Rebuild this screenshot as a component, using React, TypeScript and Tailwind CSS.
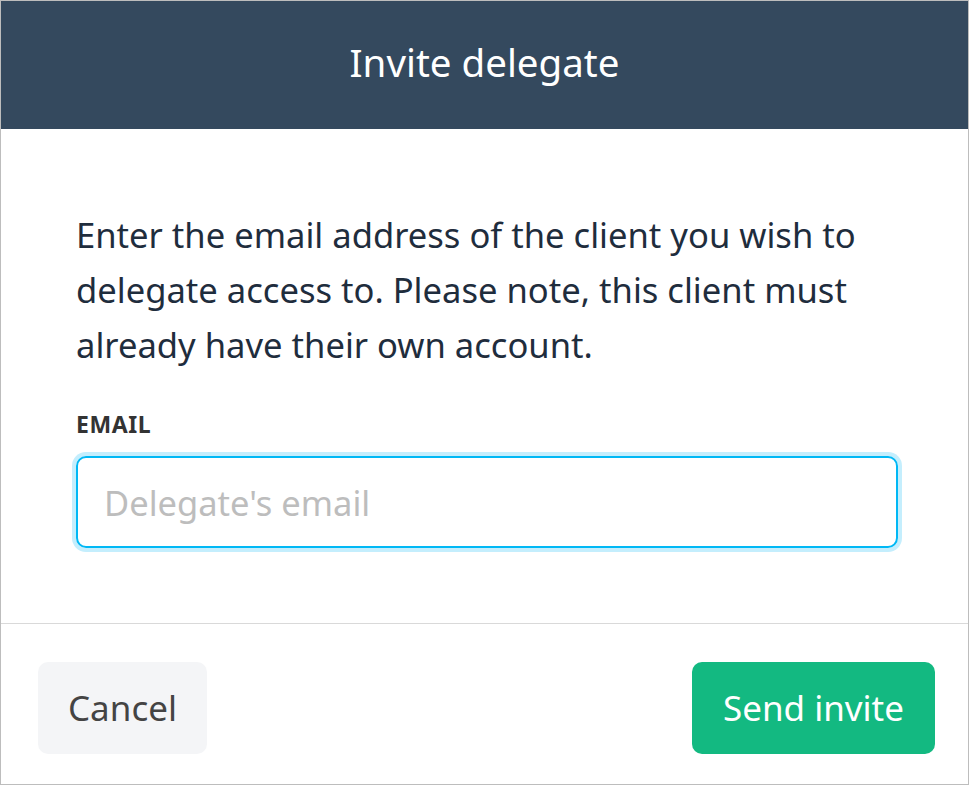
export default function App() {
  return (
    <div
      className="flex h-[785px] w-[969px] flex-col border border-[#bdbdbd] bg-white"
      style={{ fontFamily: '"Noto Sans", "Open Sans", sans-serif' }}
    >
      <header className="flex h-[128px] items-center justify-center bg-[#34495e]">
        <h1 className="pb-[4px] text-[38.5px] font-normal text-white">Invite delegate</h1>
      </header>

      <section className="flex flex-col pt-[78px] pr-[70px] pb-[75px] pl-[75px]">
        <p className="text-[34.6px] leading-[55px] text-[#1f2d3d]">
          Enter the email address of the client you wish to delegate access to. Please note, this client must already
          have their own account.
        </p>
        <label className="mt-[38px] text-[23px] leading-[28px] font-bold tracking-wide text-[#333]">EMAIL</label>
        <input
          type="text"
          placeholder="Delegate's email"
          className="mt-[18px] h-[92px] w-full rounded-[10px] border-2 border-[#00b8f5] px-[26px] text-[34.5px] text-[#333] outline-none ring-4 ring-[#c4eefd] placeholder:text-[#bdbdbd]"
        />
      </section>

      <footer className="flex flex-1 items-start justify-between border-t border-[#d9d9d9] pt-[38px] pl-[37px] pr-[33px]">
        <button className="h-[92px] rounded-[10px] bg-[#f4f5f7] px-[30px] text-[35px] text-[#444]">Cancel</button>
        <button className="h-[92px] rounded-[10px] bg-[#13b981] px-[31px] text-[35px] text-white">Send invite</button>
      </footer>
    </div>
  );
}
